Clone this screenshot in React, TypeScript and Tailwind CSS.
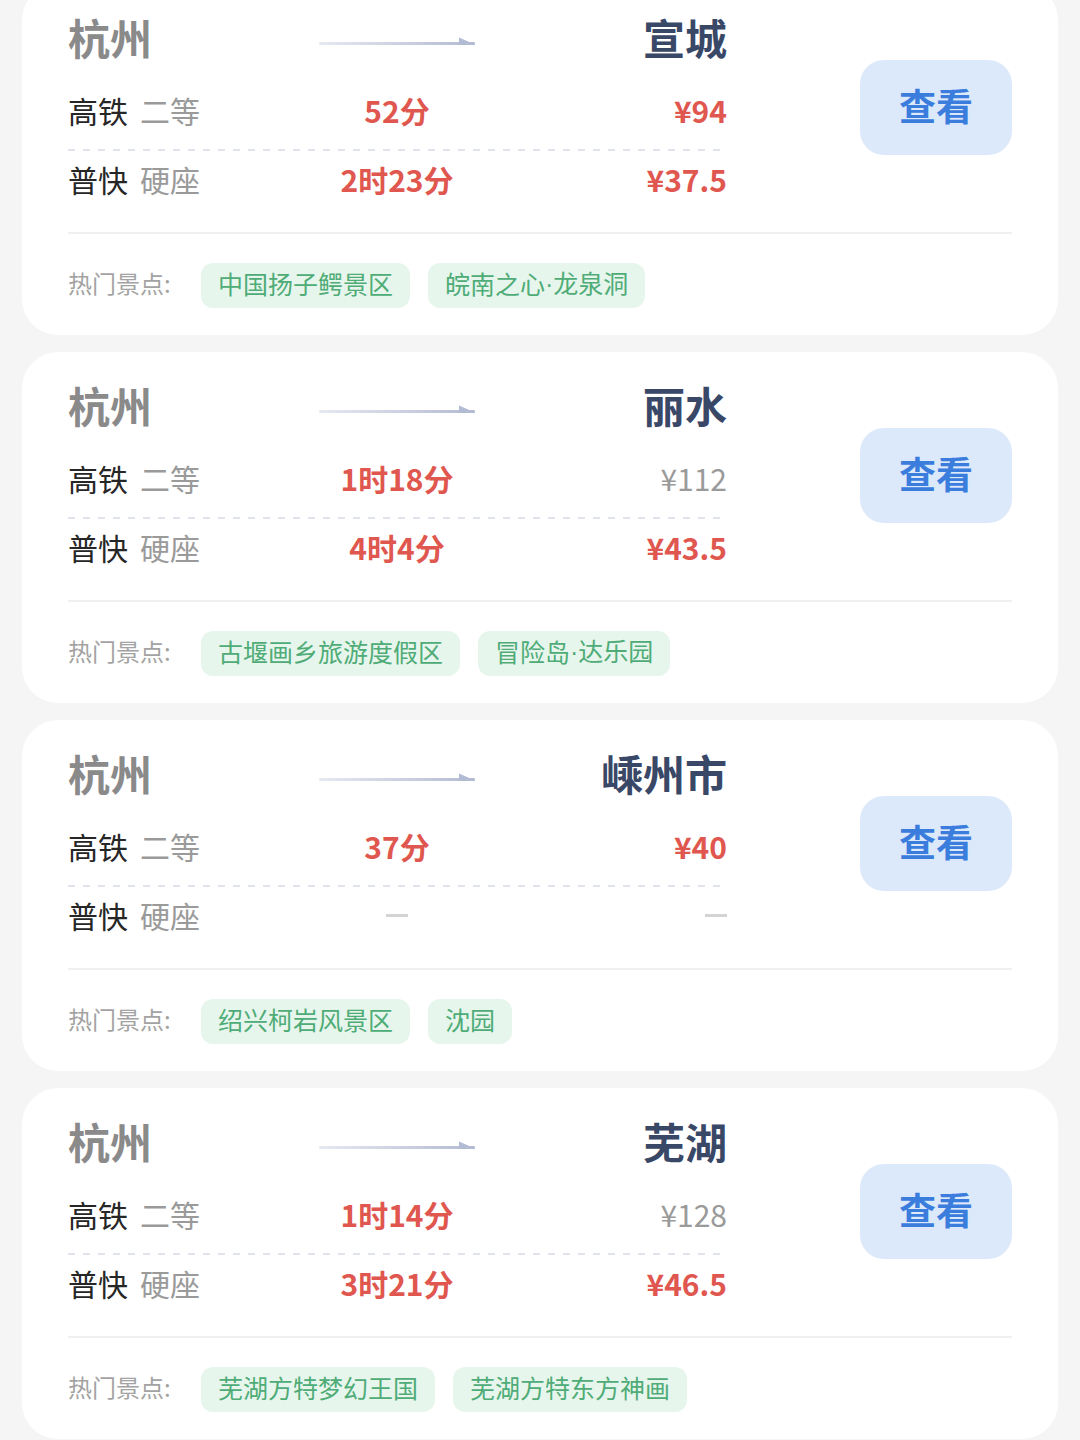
type Route = {
  to: string;
  gaotie: { time: string; price: string; priceMuted?: boolean };
  pukuai: { time: string; price: string; priceMuted?: boolean } | null;
  spots: string[];
};

const routes: Route[] = [
  {
    to: "宣城",
    gaotie: { time: "52分", price: "¥94" },
    pukuai: { time: "2时23分", price: "¥37.5" },
    spots: ["中国扬子鳄景区", "皖南之心·龙泉洞"],
  },
  {
    to: "丽水",
    gaotie: { time: "1时18分", price: "¥112", priceMuted: true },
    pukuai: { time: "4时4分", price: "¥43.5" },
    spots: ["古堰画乡旅游度假区", "冒险岛·达乐园"],
  },
  {
    to: "嵊州市",
    gaotie: { time: "37分", price: "¥40" },
    pukuai: null,
    spots: ["绍兴柯岩风景区", "沈园"],
  },
  {
    to: "芜湖",
    gaotie: { time: "1时14分", price: "¥128", priceMuted: true },
    pukuai: { time: "3时21分", price: "¥46.5" },
    spots: ["芜湖方特梦幻王国", "芜湖方特东方神画"],
  },
];

function Arrow() {
  return (
    <svg width="156" height="12" viewBox="0 0 156 12" fill="none">
      <defs>
        <linearGradient id="arrowLine" x1="0" y1="0" x2="1" y2="0">
          <stop offset="0" stopColor="#e6e9f1" />
          <stop offset="1" stopColor="#b3bbd2" />
        </linearGradient>
      </defs>
      <rect x="0" y="6" width="156" height="3" rx="1.2" fill="url(#arrowLine)" />
      <polygon points="140,1.5 157,9 140,9" fill="#b3bbd2" />
    </svg>
  );
}

function Dash() {
  return <span className="inline-block h-[3px] w-[22px] bg-[#d4d4d4]" />;
}

// the CJK font draws · full width, so the dot gets a latin face
function SpotName({ text }: { text: string }) {
  const parts = text.split("·");
  return (
    <>
      {parts.map((p, i) => (
        <span key={i}>
          {i > 0 && <span className="font-['Liberation_Sans']">·</span>}
          {p}
        </span>
      ))}
    </>
  );
}

function TrainRow({
  kind,
  seat,
  data,
  className,
}: {
  kind: string;
  seat: string;
  data: Route["gaotie"] | null;
  className: string;
}) {
  return (
    <div className={`grid grid-cols-[200px_258px_201px] items-center ${className}`}>
      <div className="flex items-center text-[30px] leading-none">
        <span className="text-[#262626]">{kind}</span>
        <span className="ml-[12px] text-[#9a9a9a]">{seat}</span>
      </div>
      <div className="flex justify-center">
        {data ? (
          <span className="text-[30px] font-bold leading-none text-[#e0574f]">{data.time}</span>
        ) : (
          <Dash />
        )}
      </div>
      <div className="flex justify-end">
        {data ? (
          data.priceMuted ? (
            <span className="text-[30px] leading-none text-[#9a9a9a]">{data.price}</span>
          ) : (
            <span className="text-[30px] font-bold leading-none text-[#e0574f]">{data.price}</span>
          )
        ) : (
          <Dash />
        )}
      </div>
    </div>
  );
}

function RouteCard({ route, first }: { route: Route; first?: boolean }) {
  return (
    <div
      className={`flex h-[351px] shrink-0 flex-col rounded-[36px] bg-white px-[46px] pt-[30px] ${
        first ? "-mt-[16px]" : ""
      }`}
    >
      <div className="flex">
        <div className="flex w-[659px] flex-col">
          <div className="grid h-[56px] grid-cols-[200px_258px_201px] items-center pb-[10px]">
            <span className="text-[42px] font-bold leading-none text-[#8a8a8a]">杭州</span>
            <div className="flex justify-center pt-[10px]">
              <Arrow />
            </div>
            <span className="text-right text-[42px] font-bold leading-none text-[#3a4868]">
              {route.to}
            </span>
          </div>
          <TrainRow kind="高铁" seat="二等" data={route.gaotie} className="mt-[9px] h-[70px] pb-[8px]" />
          <div className="h-[2px] bg-[linear-gradient(to_right,#e1e4ec_50%,transparent_50%)] bg-[length:15px_2px]" />
          <TrainRow kind="普快" seat="硬座" data={route.pukuai} className="h-[62px] pb-[6px]" />
        </div>
        <div className="ml-auto mt-[46px] flex h-[95px] w-[152px] items-center justify-center rounded-[24px] bg-[#dce9fb] pb-[4px]">
          <span className="text-[37px] font-bold leading-none text-[#3a7ddd]">查看</span>
        </div>
      </div>
      <div className="mt-[19px] h-[1.5px] bg-[#f0f0f0]" />
      <div className="mt-[29px] flex items-center">
        <span className="w-[133px] pb-[4px] text-[24px] leading-none text-[#a3a3a3]">热门景点:</span>
        <div className="flex gap-[18px]">
          {route.spots.map((s) => (
            <span
              key={s}
              className="flex h-[45px] items-center rounded-[12px] bg-[#e7f6ed] px-[17px] pb-[3px] text-[25px] leading-none text-[#4fac77]"
            >
              <SpotName text={s} />
            </span>
          ))}
        </div>
      </div>
    </div>
  );
}

export default function App() {
  return (
    <div
      className="flex h-[1440px] flex-col gap-[17px] overflow-hidden bg-[#f5f5f5] px-[22px]"
      style={{ fontFamily: '"Noto Sans CJK SC", "Noto Sans", sans-serif' }}
    >
      {routes.map((r, i) => (
        <RouteCard key={r.to} route={r} first={i === 0} />
      ))}
    </div>
  );
}
